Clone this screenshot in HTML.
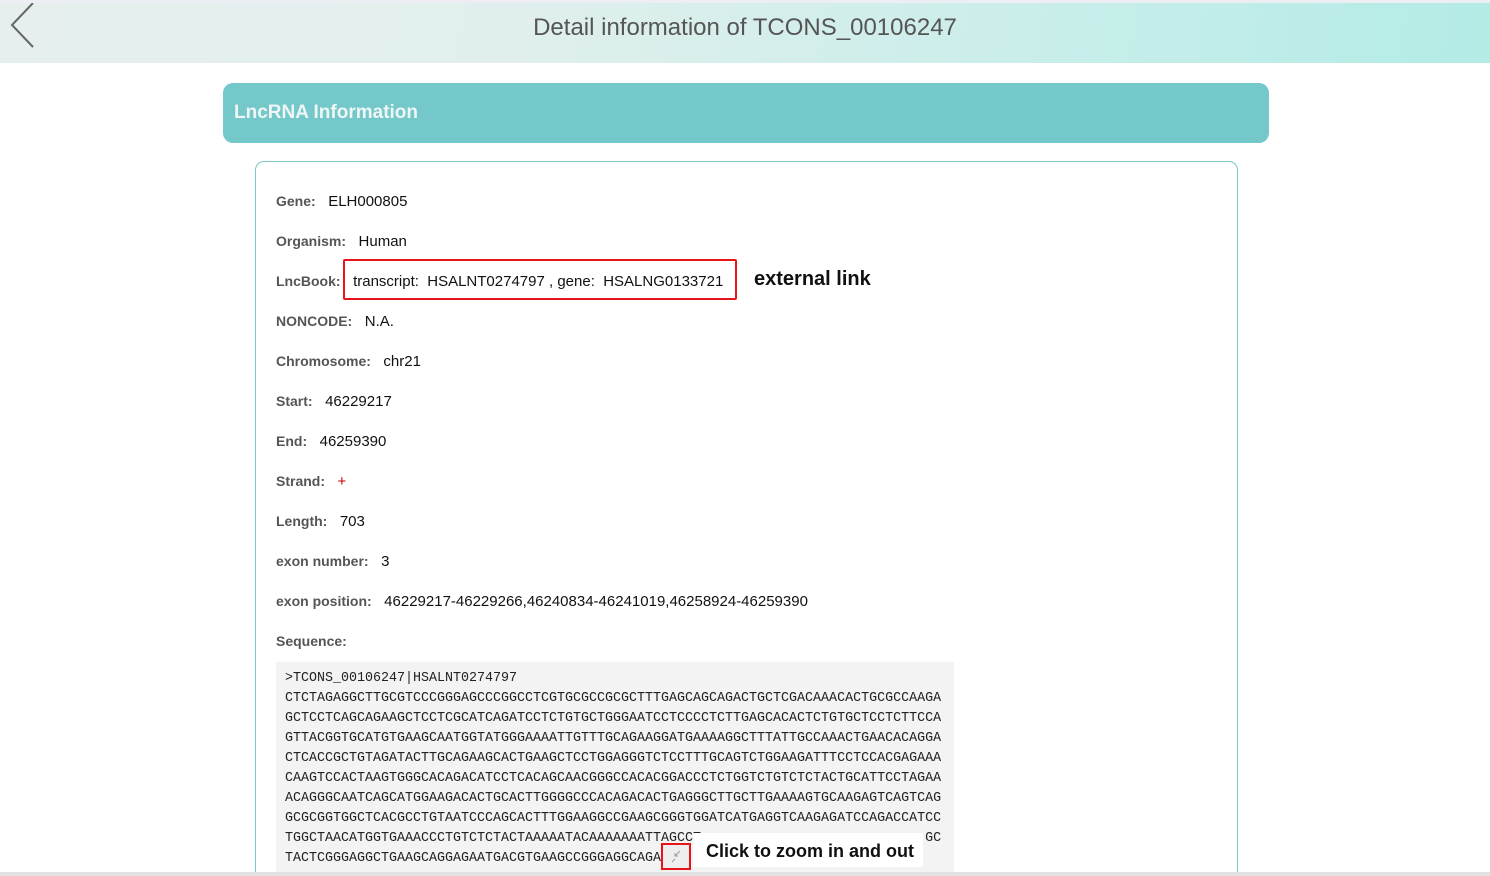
<!DOCTYPE html>
<html><head><meta charset="utf-8"><style>
html,body{margin:0;width:1490px;height:876px;overflow:hidden}
body{background:#fff;font-family:"Liberation Sans",Arial,sans-serif;position:relative}
.top{position:absolute;left:0;top:0;width:1490px;height:3px;background:#eceef4}
.hdr{position:absolute;left:0;top:3px;width:1490px;height:60px;background:linear-gradient(100deg,#e6efee 0%,#e0efed 35%,#c9eeea 70%,#b3ebe5 100%)}
.hdr h1{margin:0;text-align:center;font-weight:normal;font-size:24px;color:#555;line-height:50px}
.card{position:absolute;left:223px;top:83px;width:1046px;height:60px;background:#74c8c9;border-radius:10px}
.card span{position:absolute;left:11px;top:19px;color:#eef6f6;font-weight:bold;font-size:19px}
.panel{position:absolute;left:255px;top:161px;width:981px;height:720px;border:1px solid #7cc6c6;border-bottom:none;border-radius:9px 9px 0 0}
.row{position:absolute;left:276px;font-size:15px;color:#111;white-space:pre}
.row b{color:#555;font-size:14px;}
.box{position:absolute;left:343px;top:259px;width:390px;height:37px;border:2px solid #e8141a;border-radius:2px}
.ext{position:absolute;left:754px;top:268px;font-weight:bold;font-size:20px;color:#111}
.seq{position:absolute;left:276px;top:662px;width:678px;height:210px;background:#f3f3f4;overflow:hidden}
.seq pre{margin:0;position:absolute;left:9px;top:6px;font-family:"Liberation Mono",monospace;font-size:14.1px;line-height:20px;color:#222;transform:scaleX(0.946);transform-origin:0 0}
.tip{position:absolute;left:693px;top:833px;width:230px;height:34px;background:#fff;font-weight:bold;font-size:18px;color:#111}
.tip span{position:absolute;left:13px;top:8px}
.zb{position:absolute;left:661px;top:843px;width:26px;height:23px;border:2px solid #e8141a;background:#eee}
.bot{position:absolute;left:0;top:872px;width:1490px;height:4px;background:#e2e2e2}
</style></head><body>
<div class="top"></div>
<div class="hdr"><h1>Detail information of TCONS_00106247</h1>
<svg style="position:absolute;left:8px;top:0" width="30" height="46"><path d="M25 0 L4 22 L25 44" fill="none" stroke="#666" stroke-width="2"/></svg></div>
<div class="card"><span>LncRNA Information</span></div>
<div class="panel"></div>
<div class="row" style="top:193px"><b>Gene:</b>   ELH000805</div>
<div class="row" style="top:233px"><b>Organism:</b>   Human</div>
<div class="row" style="top:273px"><b>LncBook:</b>   transcript:  HSALNT0274797 , gene:  HSALNG0133721</div>
<div class="box"></div><div class="ext">external link</div>
<div class="row" style="top:313px"><b>NONCODE:</b>   N.A.</div>
<div class="row" style="top:353px"><b>Chromosome:</b>   chr21</div>
<div class="row" style="top:393px"><b>Start:</b>   46229217</div>
<div class="row" style="top:433px"><b>End:</b>   46259390</div>
<div class="row" style="top:473px"><b>Strand:</b>   <span style="color:#c00">+</span></div>
<div class="row" style="top:513px"><b>Length:</b>   703</div>
<div class="row" style="top:553px"><b>exon number:</b>   3</div>
<div class="row" style="top:593px"><b>exon position:</b>   46229217-46229266,46240834-46241019,46258924-46259390</div>
<div class="row" style="top:633px"><b>Sequence:</b></div>
<div class="seq"><pre>&gt;TCONS_00106247|HSALNT0274797
CTCTAGAGGCTTGCGTCCCGGGAGCCCGGCCTCGTGCGCCGCGCTTTGAGCAGCAGACTGCTCGACAAACACTGCGCCAAGA
GCTCCTCAGCAGAAGCTCCTCGCATCAGATCCTCTGTGCTGGGAATCCTCCCCTCTTGAGCACACTCTGTGCTCCTCTTCCA
GTTACGGTGCATGTGAAGCAATGGTATGGGAAAATTGTTTGCAGAAGGATGAAAAGGCTTTATTGCCAAACTGAACACAGGA
CTCACCGCTGTAGATACTTGCAGAAGCACTGAAGCTCCTGGAGGGTCTCCTTTGCAGTCTGGAAGATTTCCTCCACGAGAAA
CAAGTCCACTAAGTGGGCACAGACATCCTCACAGCAACGGGCCACACGGACCCTCTGGTCTGTCTCTACTGCATTCCTAGAA
ACAGGGCAATCAGCATGGAAGACACTGCACTTGGGGCCCACAGACACTGAGGGCTTGCTTGAAAAGTGCAAGAGTCAGTCAG
GCGCGGTGGCTCACGCCTGTAATCCCAGCACTTTGGAAGGCCGAAGCGGGTGGATCATGAGGTCAAGAGATCCAGACCATCC
TGGCTAACATGGTGAAACCCTGTCTCTACTAAAAATACAAAAAAATTAGCCT                            GC
TACTCGGGAGGCTGAAGCAGGAGAATGACGTGAAGCCGGGAGGCAGA</pre></div>
<div class="tip"><span>Click to zoom in and out</span></div>
<div class="zb"><svg width="26" height="23"><path d="M17 6 L12 11 M12 8 L12 11 L15 11 M9 17 L12 14" stroke="#999" stroke-width="1" fill="none"/></svg></div>
<div class="bot"></div>
</body></html>
